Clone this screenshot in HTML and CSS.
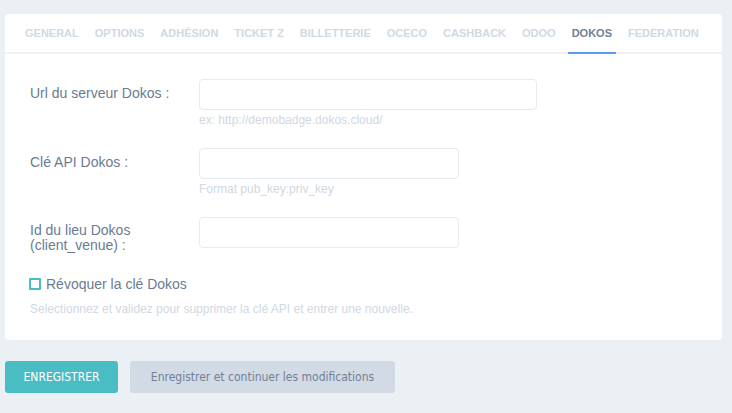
FILE: index.html
```html
<!DOCTYPE html>
<html lang="fr">
<head>
<meta charset="utf-8">
<link rel="stylesheet" href="styles.css">
</head>
<body>
<div class="card">
  <nav class="tabs">
    <span class="tab">General</span>
    <span class="tab">Options</span>
    <span class="tab">Adhésion</span>
    <span class="tab">Ticket Z</span>
    <span class="tab">Billetterie</span>
    <span class="tab">Oceco</span>
    <span class="tab">Cashback</span>
    <span class="tab">Odoo</span>
    <span class="tab active">Dokos</span>
    <span class="tab">Federation</span>
  </nav>
  <div class="body">
    <div class="row">
      <label class="label">Url du serveur Dokos :</label>
      <div class="field">
        <input class="input wide" type="text">
        <div class="help">ex: http://demobadge.dokos.cloud/</div>
      </div>
    </div>
    <div class="row">
      <label class="label">Clé API Dokos :</label>
      <div class="field">
        <input class="input" type="text">
        <div class="help">Format pub_key:priv_key</div>
      </div>
    </div>
    <div class="row row3">
      <label class="label">Id du lieu Dokos<br>(client_venue) :</label>
      <div class="field">
        <input class="input" type="text">
      </div>
    </div>
    <div class="check">
      <span class="box"></span>
      <span>Révoquer la clé Dokos</span>
    </div>
    <div class="help help2">Selectionnez et validez pour supprimer la clé API et entrer une nouvelle.</div>
  </div>
</div>
<div class="actions">
  <button class="btn primary">ENREGISTRER</button>
  <button class="btn secondary">Enregistrer et continuer les modifications</button>
</div>
</body>
</html>
```
FILE: styles.css
```css
html, body { margin: 0; padding: 0; }
body {
  background: #ebf0f5;
  font-family: "Liberation Sans", Arial, sans-serif;
  width: 732px;
  height: 413px;
  overflow: hidden;
  padding: 14px 10px 0 5px;
  box-sizing: border-box;
}
.card {
  background: #fff;
  border-radius: 4px;
  height: 326px;
  box-sizing: border-box;
}
.tabs {
  display: flex;
  gap: 8px;
  padding: 0 0 0 16px;
  border-bottom: 2px solid #edf1f6;
  height: 38px;
  box-sizing: content-box;
}
.tab {
  padding: 13px 4px 0;
  font-size: 11px;
  font-weight: bold;
  text-transform: uppercase;
  color: #d0d9e4;
  margin-bottom: -2px;
  border-bottom: 2px solid transparent;
}
.tab.active {
  color: #718096;
  border-bottom-color: #5d9cec;
}
.body {
  padding: 25px 25px 0 25px;
}
.row {
  display: flex;
  align-items: flex-start;
  height: 69px;
}
.label {
  width: 169px;
  flex: none;
  font-size: 14px;
  color: #6b7b93;
  padding-top: 6px;
  line-height: 16px;
}
.row3 .label { padding-top: 6px; line-height: 15px; }
.field { display: flex; flex-direction: column; }
.input {
  width: 260px;
  height: 31px;
  box-sizing: border-box;
  border: 1px solid #e6ebf1;
  border-radius: 4px;
  margin: 0;
  padding: 0 8px;
  outline: none;
  background: #fff;
}
.input.wide { width: 338px; }
.help {
  font-size: 12px;
  color: #cfd8e3;
  margin-top: 3px;
  line-height: 14px;
}
.row3 { height: 59px; }
.check {
  display: flex;
  align-items: center;
  gap: 5px;
  font-size: 14px;
  color: #6b7b93;
  margin-left: -1px;
  height: 16px;
}
.box {
  width: 12px;
  height: 12px;
  box-sizing: border-box;
  border: 2px solid #4abcc4;
  border-radius: 1px;
  display: inline-block;
}
.help2 { margin-top: 10px; }
.actions {
  display: flex;
  gap: 12px;
  margin-top: 21px;
}
.btn {
  height: 32px;
  border: none;
  border-radius: 3px;
  font-family: "DejaVu Sans Condensed", "Roboto", sans-serif;
  font-size: 12px;
  padding: 0;
  cursor: pointer;
}
.primary {
  width: 113px;
  background: #4abcc4;
  color: #fff;
}
.secondary {
  width: 265px;
  background: #d2dbe5;
  color: #718096;
}
```
